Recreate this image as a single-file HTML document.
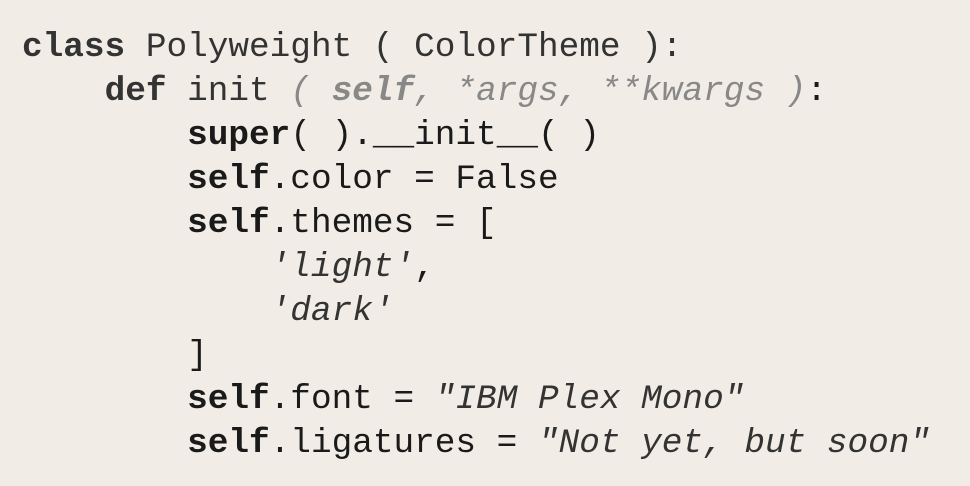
<!DOCTYPE html>
<html><head><meta charset="utf-8"><style>
html,body{margin:0;padding:0;background:#f1ece5;width:970px;height:486px;overflow:hidden}
pre{margin:0;position:absolute;left:22px;top:26px;font-family:"Liberation Mono",monospace;font-size:34.4px;line-height:44px;color:#1a1a1a}
.d{color:#333}
b{font-weight:bold}
.g{color:#888;font-style:italic}
.s{font-style:italic;color:#333}
</style></head><body>
<pre><span class="d"><b>class</b> Polyweight ( ColorTheme ):</span>
    <b class="d">def</b><span class="d"> init </span><span class="g">( <b>self</b>, *args, **kwargs )</span>:
        <b>super</b>( ).__init__( )
        <b>self</b>.color = False
        <b>self</b>.themes = [
            <span class="s">'light'</span>,
            <span class="s">'dark'</span>
        ]
        <b>self</b>.font = <span class="s">"IBM Plex Mono"</span>
        <b>self</b>.ligatures = <span class="s">"Not yet, but soon"</span></pre>
</body></html>
